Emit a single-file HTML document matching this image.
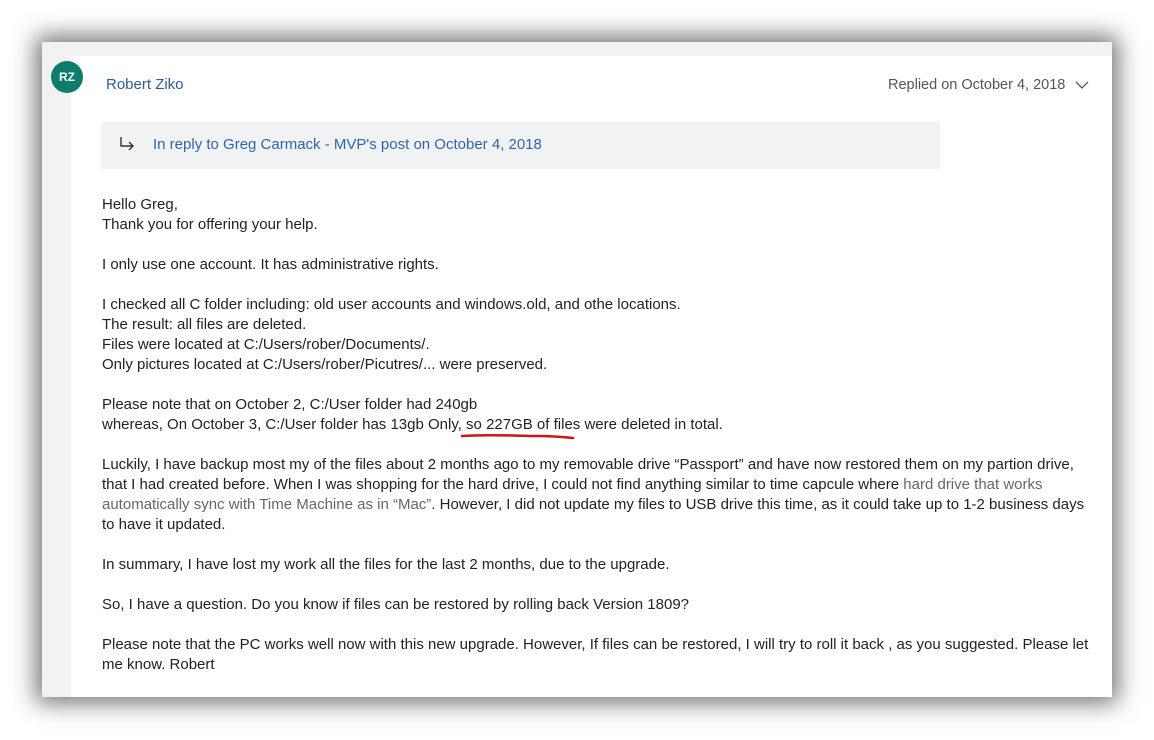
<!DOCTYPE html>
<html><head><meta charset="utf-8"><style>
body{margin:0;width:1154px;height:740px;background:#fff;position:relative;overflow:hidden;font-family:"Liberation Sans",sans-serif;}
.card{position:absolute;left:42px;top:42px;width:1070px;height:655px;background:#f2f2f2;box-shadow:0 0 22px 6px rgba(0,0,0,.55);}
.inner{position:absolute;left:71px;top:56px;width:1041px;height:641px;background:#fff;}
.av{position:absolute;left:51px;top:61px;width:32px;height:32px;border-radius:50%;background:#0e7c6b;color:#fff;font-size:12px;font-weight:bold;text-align:center;line-height:32px;}
.name{position:absolute;left:106px;top:76px;font-size:15px;color:#2f5b8f;}
.rep{position:absolute;left:888px;top:77px;font-size:14.5px;color:#555;}
.box{position:absolute;left:101px;top:122px;width:839px;height:47px;background:#f1f2f4;}
.box span{position:absolute;left:52px;top:14px;font-size:15px;color:#2f66a8;}
.l{position:absolute;left:102px;font-size:15px;color:#222;white-space:nowrap;line-height:20px;}
.g{color:#666}
</style></head><body>
<div class="card"></div><div class="inner"></div>
<div class="av">RZ</div>
<div class="name">Robert Ziko</div>
<div class="rep">Replied on October 4, 2018</div>
<svg style="position:absolute;left:1075px;top:80px" width="14" height="10"><path d="M1 2 L7 8 L13 2" fill="none" stroke="#555" stroke-width="1.3"/></svg>
<div class="box"><svg style="position:absolute;left:17px;top:14px" width="18" height="16"><path d="M3 1 V10 H15 M11 6 L15 10 L11 14" fill="none" stroke="#333" stroke-width="1.4"/></svg><span>In reply to Greg Carmack - MVP's post on October 4, 2018</span></div>
<div class="l" style="top:195px">Hello Greg,</div>
<div class="l" style="top:215px">Thank you for offering your help.</div>
<div class="l" style="top:255px">I only use one account. It has administrative rights.</div>
<div class="l" style="top:295px">I checked all C folder including: old user accounts and windows.old, and othe locations.</div>
<div class="l" style="top:315px">The result: all files are deleted.</div>
<div class="l" style="top:335px">Files were located at C:/Users/rober/Documents/.</div>
<div class="l" style="top:355px">Only pictures located at C:/Users/rober/Picutres/... were preserved.</div>
<div class="l" style="top:395px">Please note that on October 2, C:/User folder had 240gb</div>
<div class="l" style="top:415px">whereas, On October 3, C:/User folder has 13gb Only, so 227GB of files were deleted in total.</div>
<svg style="position:absolute;left:458px;top:432px" width="120" height="12"><path d="M4 4 C30 2 60 4 80 4 C95 4 105 5 115 6" fill="none" stroke="#d0121b" stroke-width="2.5" stroke-linecap="round"/></svg>
<div class="l" style="top:455px">Luckily, I have backup most my of the files about 2 months ago to my removable drive “Passport” and have now restored them on my partion drive,</div>
<div class="l" style="top:475px">that I had created before. When I was shopping for the hard drive, I could not find anything similar to time capcule where <span class="g">hard drive that works</span></div>
<div class="l" style="top:495px"><span class="g">automatically sync with Time Machine as in “Mac”</span>. However, I did not update my files to USB drive this time, as it could take up to 1-2 business days</div>
<div class="l" style="top:515px">to have it updated.</div>
<div class="l" style="top:555px">In summary, I have lost my work all the files for the last 2 months, due to the upgrade.</div>
<div class="l" style="top:595px">So, I have a question. Do you know if files can be restored by rolling back Version 1809?</div>
<div class="l" style="top:635px">Please note that the PC works well now with this new upgrade. However, If files can be restored, I will try to roll it back , as you suggested. Please let</div>
<div class="l" style="top:655px">me know. Robert</div>
</body></html>
